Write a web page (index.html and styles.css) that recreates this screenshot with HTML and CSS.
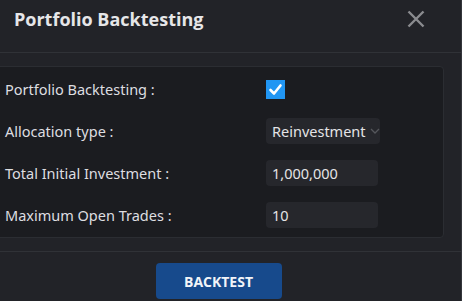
FILE: index.html
```html
<!DOCTYPE html>
<html lang="en">

<head>
  <meta charset="UTF-8">
  <meta name="viewport" content="width=device-width, initial-scale=1.0">
  <title>Portfolio Backtesting</title>
  <link rel="stylesheet" href="styles.css">
</head>

<body>
  <div class="dialog">
    <div class="dialog-head">
      <h3>Portfolio Backtesting</h3>
      <span class="close">
        <svg width="18" height="18" viewBox="0 0 18 18">
          <path d="M1.5 1.5 L16.5 16.5 M16.5 1.5 L1.5 16.5" stroke="#8a8b8f" stroke-width="2.4" fill="none" />
        </svg>
      </span>
    </div>

    <div class="dialog-body">
      <div class="panel">
        <label class="row-label">Portfolio Backtesting :</label>
        <div class="row-ctrl">
          <span class="check">
            <svg width="19" height="19" viewBox="0 0 19 19">
              <path d="M4.5 10 L8 13.5 L14.5 5.5" stroke="#fff" stroke-width="2.6" fill="none" stroke-linecap="round" stroke-linejoin="round" />
            </svg>
          </span>
        </div>

        <label class="row-label">Allocation type :</label>
        <div class="row-ctrl">
          <div class="select">
            <span>Reinvestment</span>
            <svg width="10" height="6" viewBox="0 0 10 6">
              <path d="M1 1 L5 5 L9 1" stroke="#55575c" stroke-width="1.3" fill="none" />
            </svg>
          </div>
        </div>

        <label class="row-label">Total Initial Investment :</label>
        <div class="row-ctrl">
          <div class="input">1,000,000</div>
        </div>

        <label class="row-label">Maximum Open Trades :</label>
        <div class="row-ctrl">
          <div class="input">10</div>
        </div>
      </div>
    </div>

    <div class="dialog-foot">
      <button class="btn">BACKTEST</button>
    </div>
  </div>
</body>

</html>
```

FILE: styles.css
```css
* {
  margin: 0px;
  padding: 0px;
  box-sizing: border-box;
}

body {
  background: #0c0d0f;
  font-family: "Noto Sans", "Open Sans", sans-serif;
  overflow: hidden;
}

.dialog {
  width: 462px;
  height: 301px;
  background: #222328;
  border-right: 1px solid #34363b;
  color: #e4e4e6;
}

.dialog-head {
  display: flex;
  align-items: center;
  justify-content: space-between;
  height: 53px;
  padding: 0 36px 14px 14px;
  border-bottom: 1px solid #303237;
}

.dialog-head h3 {
  font-family: "Open Sans", sans-serif;
  font-size: 18px;
  font-weight: 700;
  color: #e6e6e8;
}

.close {
  display: flex;
}

.dialog-body {
  padding: 13px 17px 13px 0;
  border-bottom: 1px solid #303237;
}

.panel {
  display: grid;
  grid-template-columns: 269px 1fr;
  grid-auto-rows: 42px;
  align-items: center;
  height: 172px;
  padding: 1px 0 3px 0;
  margin-left: -4px;
  background: #1b1c20;
  border: 1px solid #2b2d32;
  border-radius: 4px;
}

.row-label {
  padding-left: 8px;
  font-size: 14.5px;
  color: #dedee0;
}

.row-ctrl {
  display: flex;
}

.check {
  display: flex;
  width: 19px;
  height: 19px;
  background: #2196f3;
}

.select {
  display: flex;
  align-items: center;
  gap: 4px;
  width: 114px;
  height: 26px;
  padding-left: 6px;
  background: #26272c;
  border-radius: 4px;
  font-size: 14.5px;
}

.input {
  display: flex;
  align-items: center;
  width: 112px;
  height: 26px;
  padding-left: 6px;
  background: #26272c;
  border-radius: 4px;
  font-size: 14.5px;
}

.dialog-foot {
  display: flex;
  justify-content: center;
  padding: 11px 24px 0 0;
}

.btn {
  width: 126px;
  height: 36px;
  background: #174a8c;
  border: none;
  border-radius: 4px;
  color: #f2f4f8;
  font-family: "Open Sans", sans-serif;
  font-size: 14px;
  font-weight: 700;
}
```
